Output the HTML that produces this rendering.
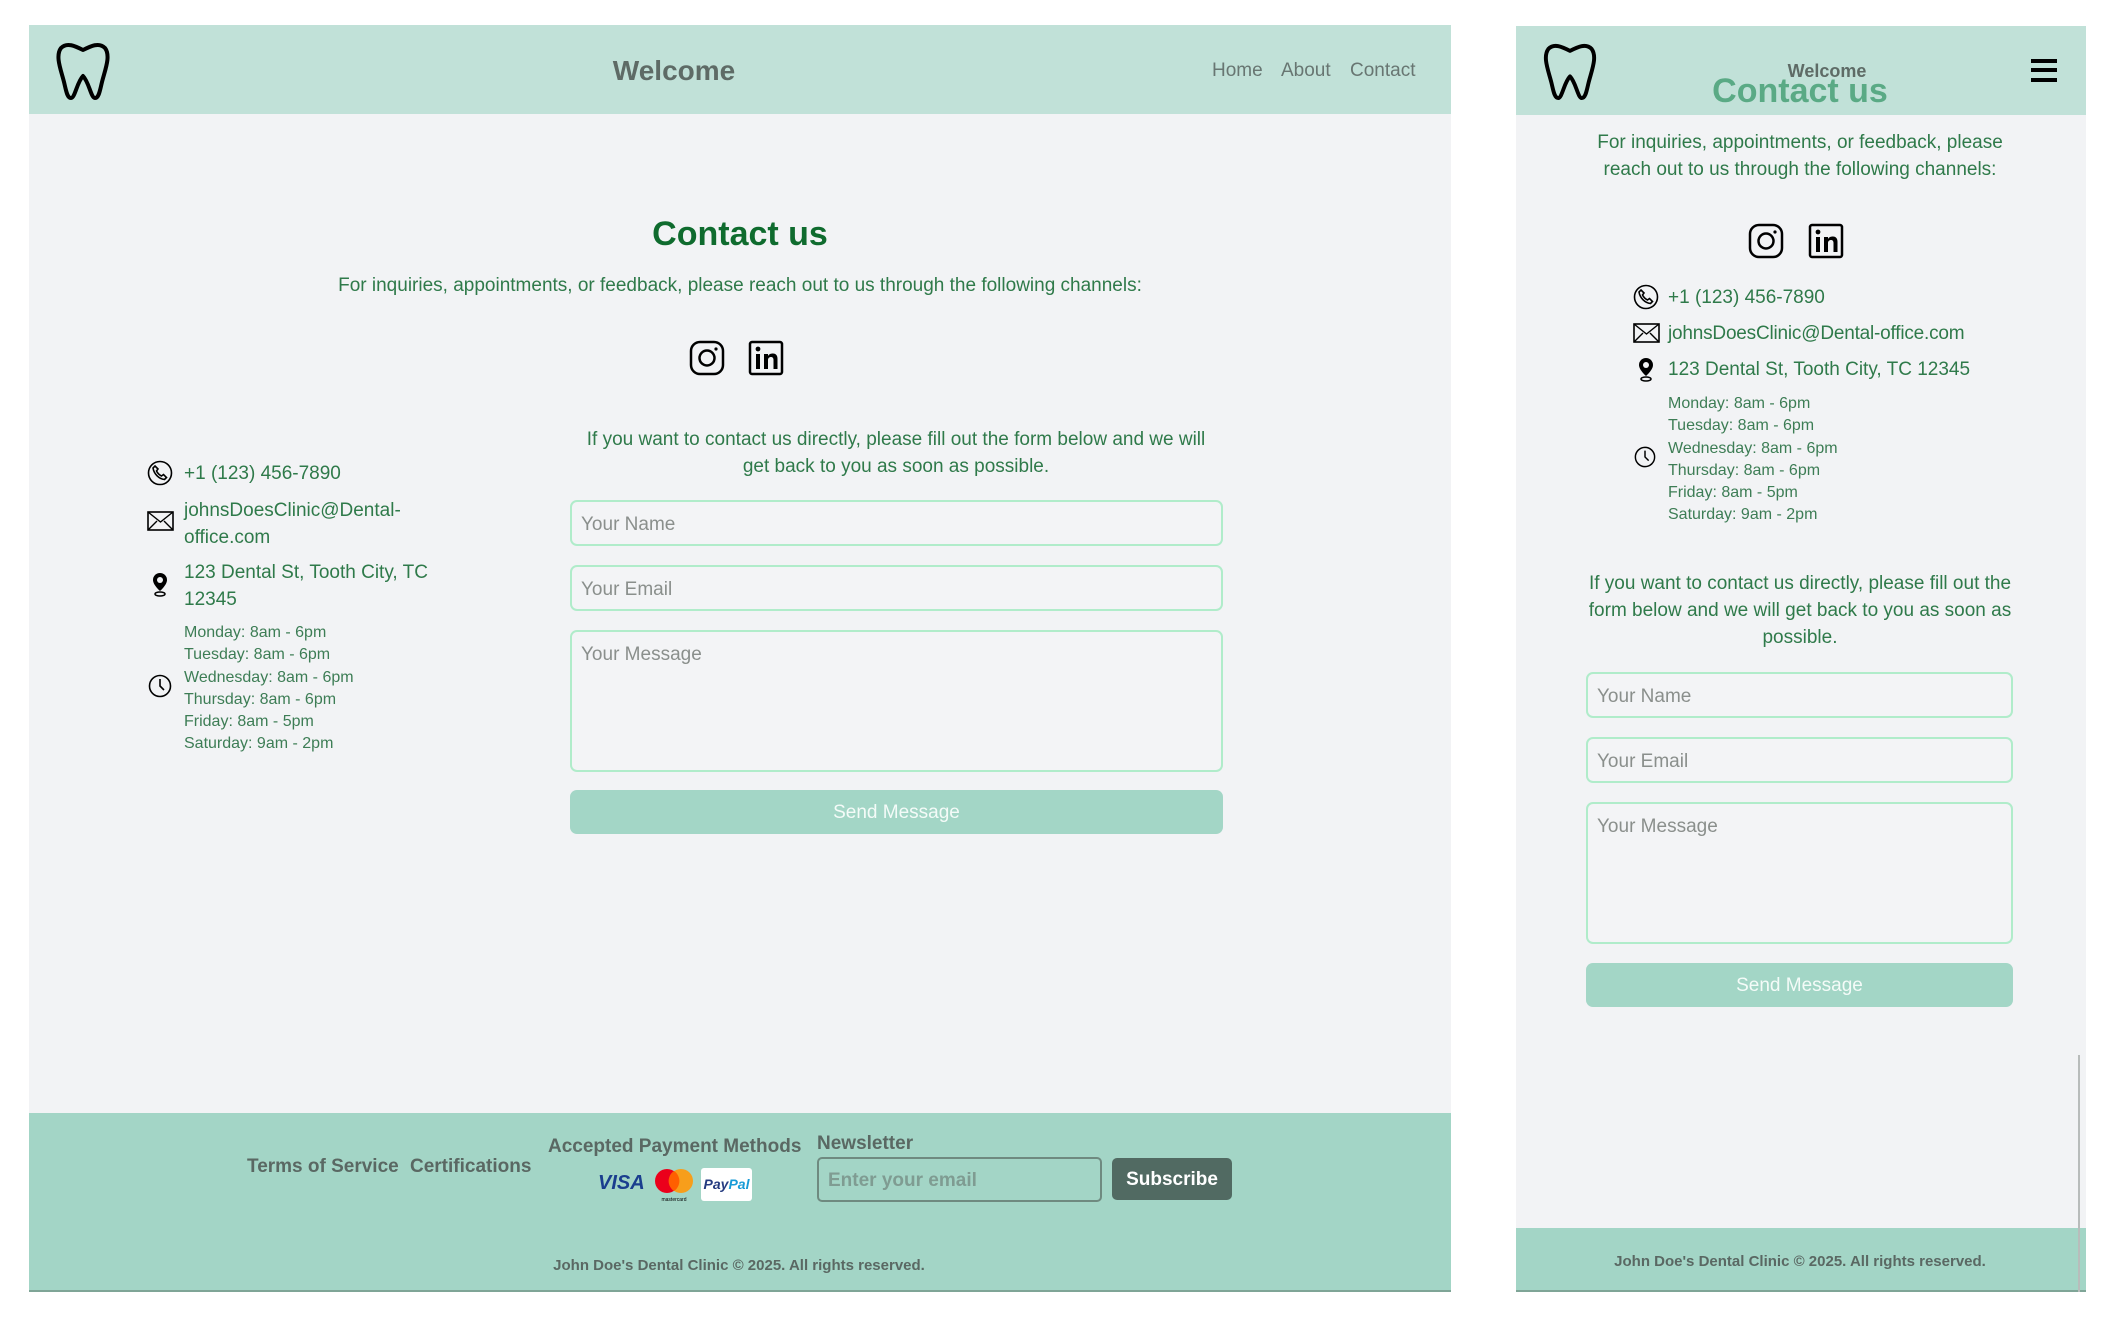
<!DOCTYPE html>
<html><head><meta charset="utf-8"><style>
*{margin:0;padding:0;box-sizing:border-box}
body{width:2103px;height:1319px;background:#fff;font-family:"Liberation Sans",sans-serif;position:relative;overflow:hidden}
.a{position:absolute;white-space:nowrap}
.c{transform:translateX(-50%);text-align:center}
.g{color:#2f7a4a}
.inp{position:absolute;border:2px solid #b0ecca;border-radius:7px;background:#f3f4f6;color:#8a8f8c;font-size:19px;padding:12px 9px}
.btn{position:absolute;background:#a3d6c6;border-radius:7px;color:#f4fbf8;font-size:19px;text-align:center}
.hr{font-size:16px;color:#3d7d55;line-height:22.3px}
</style></head><body>
<!-- LEFT PANEL -->
<div class="a" style="left:29px;top:25px;width:1422px;height:1267px;background:#f2f3f5"></div>
<div class="a" style="left:29px;top:25px;width:1422px;height:89px;background:#c1e1d8"></div>
<svg class="a" style="left:55px;top:42px" width="56" height="58" viewBox="0 0 56 58"><path d="M6 6C12 0 20 4 28 8 36 4 44 0 50 6 56 14 50 28 47 40 45 48 44 56 40 56 36 56 34 40 28 34 22 40 20 56 16 56 12 56 11 48 9 40 6 28 0 14 6 6Z" fill="none" stroke="#000" stroke-width="4" stroke-linejoin="round"/></svg>
<div class="a c" style="left:674px;top:55px;font-size:28px;font-weight:bold;color:#5e6b66">Welcome</div>
<div class="a" style="left:1212px;top:60px;font-size:19px;color:#687672">Home</div>
<div class="a" style="left:1281px;top:60px;font-size:19px;color:#687672">About</div>
<div class="a" style="left:1350px;top:60px;font-size:19px;color:#687672">Contact</div>
<div class="a c" style="left:740px;top:215px;font-size:34px;font-weight:bold;color:#0f6b2e">Contact us</div>
<div class="a c g" style="left:740px;top:275px;font-size:19px">For inquiries, appointments, or feedback, please reach out to us through the following channels:</div>
<svg class="a" style="left:689px;top:340px" width="36" height="36" viewBox="0 0 36 36"><rect x="2" y="2" width="32" height="32" rx="9" fill="none" stroke="#000" stroke-width="2.5"/><circle cx="18" cy="18" r="7.5" fill="none" stroke="#000" stroke-width="2.5"/><circle cx="27" cy="9" r="1.6"/></svg>
<svg class="a" style="left:748px;top:340px" width="36" height="36" viewBox="0 0 36 36"><rect x="2" y="2" width="32" height="32" rx="2" fill="none" stroke="#000" stroke-width="2.5"/><rect x="8" y="14" width="4" height="15"/><circle cx="10" cy="9" r="2.4"/><path d="M16 14h4v2c1-2 3-2.5 5-2.5 3 0 4.5 2 4.5 5.5V29h-4v-9c0-2-1-3-2.5-3S20 18 20 20v9h-4Z"/></svg>
<div class="a c g" style="left:896px;top:426px;font-size:19px;line-height:27px">If you want to contact us directly, please fill out the form below and we will<br>get back to you as soon as possible.</div>
<div class="inp" style="left:570px;top:500px;width:653px;height:46px">Your Name</div>
<div class="inp" style="left:570px;top:565px;width:653px;height:46px">Your Email</div>
<div class="inp" style="left:570px;top:630px;width:653px;height:142px">Your Message</div>
<div class="btn" style="left:570px;top:790px;width:653px;height:44px;line-height:46px">Send Message</div>
<!-- left contact info -->
<svg class="a" style="left:147px;top:460px" width="26" height="26" viewBox="0 0 26 26"><circle cx="13" cy="13" r="11.5" fill="none" stroke="#000" stroke-width="1.6"/><path d="M8 6l3 3-1.5 2c1 2 3 4 5 5l2-1.5 3 3-2 2C12 19 7 14 6 8Z" fill="none" stroke="#000" stroke-width="1.6"/></svg>
<div class="a g" style="left:184px;top:463px;font-size:19px">+1 (123) 456-7890</div>
<svg class="a" style="left:147px;top:511px" width="27" height="20" viewBox="0 0 27 20"><rect x="1" y="1" width="25" height="18" fill="none" stroke="#000" stroke-width="1.6"/><path d="M1 1l12.5 10L26 1M1 19l9-9M26 19l-9-9" fill="none" stroke="#000" stroke-width="1.4"/></svg>
<div class="a g" style="left:184px;top:497px;font-size:19px;line-height:27px">johnsDoesClinic@Dental-<br>office.com</div>
<svg class="a" style="left:151px;top:572px" width="18" height="25" viewBox="0 0 18 25"><path d="M9 1a7 7 0 0 0-7 7c0 5 7 11 7 11s7-6 7-11a7 7 0 0 0-7-7Z"/><circle cx="9" cy="8" r="3" fill="#f2f3f5"/><ellipse cx="9" cy="22" rx="5" ry="2" fill="none" stroke="#000" stroke-width="1.5"/></svg>
<div class="a g" style="left:184px;top:559px;font-size:19px;line-height:27px">123 Dental St, Tooth City, TC<br>12345</div>
<svg class="a" style="left:148px;top:674px" width="24" height="24" viewBox="0 0 24 24"><circle cx="12" cy="12" r="10.5" fill="none" stroke="#000" stroke-width="1.6"/><path d="M12 5v7l4 4" fill="none" stroke="#000" stroke-width="1.6"/></svg>
<div class="a hr" style="left:184px;top:622px">Monday: 8am - 6pm<br>Tuesday: 8am - 6pm<br>Wednesday: 8am - 6pm<br>Thursday: 8am - 6pm<br>Friday: 8am - 5pm<br>Saturday: 9am - 2pm</div>
<!-- left footer -->
<div class="a" style="left:29px;top:1113px;width:1422px;height:179px;background:#a3d5c6;border-bottom:2px solid #7fa597"></div>
<div class="a" style="left:247px;top:1156px;font-size:19px;font-weight:bold;color:#5a6863">Terms of Service</div>
<div class="a" style="left:410px;top:1156px;font-size:19px;font-weight:bold;color:#5a6863">Certifications</div>
<div class="a" style="left:548px;top:1136px;font-size:19px;font-weight:bold;color:#5a6863">Accepted Payment Methods</div>
<div class="a" style="left:598px;top:1172px;font-size:20px;font-weight:bold;font-style:italic;color:#1a3e8e">VISA</div>
<svg class="a" style="left:653px;top:1168px" width="42" height="34" viewBox="0 0 42 34"><circle cx="14" cy="13" r="12" fill="#eb001b"/><circle cx="28" cy="13" r="12" fill="#f79e1b"/><path d="M21 3a12 12 0 0 1 0 20 12 12 0 0 1 0-20Z" fill="#ff5f00"/><text x="21" y="33" font-size="5" text-anchor="middle" font-family="Liberation Sans">mastercard</text></svg>
<div class="a" style="left:701px;top:1168px;width:51px;height:33px;background:#fff;border-radius:3px;font-size:14px;font-weight:bold;font-style:italic;line-height:33px;text-align:center"><span style="color:#253b80">Pay</span><span style="color:#179bd7">Pal</span></div>
<div class="a" style="left:817px;top:1133px;font-size:19px;font-weight:bold;color:#5a6863">Newsletter</div>
<div class="a" style="left:817px;top:1157px;width:285px;height:45px;border:2px solid #6f8a80;border-radius:5px;font-size:19px;font-weight:bold;color:#7f9c92;padding:11px 9px">Enter your email</div>
<div class="a" style="left:1112px;top:1158px;width:120px;height:42px;background:#516a62;border-radius:5px;color:#fff;font-size:19px;font-weight:bold;text-align:center;line-height:44px">Subscribe</div>
<div class="a c" style="left:739px;top:1257px;font-size:15px;font-weight:bold;color:#5a6863">John Doe's Dental Clinic © 2025. All rights reserved.</div>

<!-- RIGHT PANEL -->
<div class="a" style="left:1516px;top:26px;width:570px;height:1266px;background:#f2f3f5"></div>
<div class="a" style="left:1516px;top:26px;width:570px;height:89px;background:#c1e1d8"></div>
<svg class="a" style="left:1542px;top:43px" width="56" height="57" viewBox="0 0 56 58"><path d="M6 6C12 0 20 4 28 8 36 4 44 0 50 6 56 14 50 28 47 40 45 48 44 56 40 56 36 56 34 40 28 34 22 40 20 56 16 56 12 56 11 48 9 40 6 28 0 14 6 6Z" fill="none" stroke="#000" stroke-width="4" stroke-linejoin="round"/></svg>
<div class="a c" style="left:1827px;top:61px;font-size:18px;font-weight:bold;color:#5e6b66">Welcome</div>
<div class="a c" style="left:1800px;top:72px;font-size:34px;font-weight:bold;color:#5aaa85">Contact us</div>
<div class="a" style="left:2031px;top:59px;width:26px;height:4px;background:#000;box-shadow:0 9px 0 #000,0 19px 0 #000"></div>
<div class="a c g" style="left:1800px;top:129px;font-size:19px;line-height:27px">For inquiries, appointments, or feedback, please<br>reach out to us through the following channels:</div>
<svg class="a" style="left:1748px;top:223px" width="36" height="36" viewBox="0 0 36 36"><rect x="2" y="2" width="32" height="32" rx="9" fill="none" stroke="#000" stroke-width="2.5"/><circle cx="18" cy="18" r="7.5" fill="none" stroke="#000" stroke-width="2.5"/><circle cx="27" cy="9" r="1.6"/></svg>
<svg class="a" style="left:1808px;top:223px" width="36" height="36" viewBox="0 0 36 36"><rect x="2" y="2" width="32" height="32" rx="2" fill="none" stroke="#000" stroke-width="2.5"/><rect x="8" y="14" width="4" height="15"/><circle cx="10" cy="9" r="2.4"/><path d="M16 14h4v2c1-2 3-2.5 5-2.5 3 0 4.5 2 4.5 5.5V29h-4v-9c0-2-1-3-2.5-3S20 18 20 20v9h-4Z"/></svg>
<svg class="a" style="left:1633px;top:284px" width="26" height="26" viewBox="0 0 26 26"><circle cx="13" cy="13" r="11.5" fill="none" stroke="#000" stroke-width="1.6"/><path d="M8 6l3 3-1.5 2c1 2 3 4 5 5l2-1.5 3 3-2 2C12 19 7 14 6 8Z" fill="none" stroke="#000" stroke-width="1.6"/></svg>
<div class="a g" style="left:1668px;top:287px;font-size:19px">+1 (123) 456-7890</div>
<svg class="a" style="left:1633px;top:323px" width="27" height="20" viewBox="0 0 27 20"><rect x="1" y="1" width="25" height="18" fill="none" stroke="#000" stroke-width="1.6"/><path d="M1 1l12.5 10L26 1M1 19l9-9M26 19l-9-9" fill="none" stroke="#000" stroke-width="1.4"/></svg>
<div class="a g" style="left:1668px;top:323px;font-size:19px;letter-spacing:-0.2px">johnsDoesClinic@Dental-office.com</div>
<svg class="a" style="left:1637px;top:357px" width="18" height="25" viewBox="0 0 18 25"><path d="M9 1a7 7 0 0 0-7 7c0 5 7 11 7 11s7-6 7-11a7 7 0 0 0-7-7Z"/><circle cx="9" cy="8" r="3" fill="#f2f3f5"/><ellipse cx="9" cy="22" rx="5" ry="2" fill="none" stroke="#000" stroke-width="1.5"/></svg>
<div class="a g" style="left:1668px;top:359px;font-size:19px">123 Dental St, Tooth City, TC 12345</div>
<svg class="a" style="left:1634px;top:446px" width="22" height="22" viewBox="0 0 24 24"><circle cx="12" cy="12" r="10.5" fill="none" stroke="#000" stroke-width="1.6"/><path d="M12 5v7l4 4" fill="none" stroke="#000" stroke-width="1.6"/></svg>
<div class="a hr" style="left:1668px;top:393px">Monday: 8am - 6pm<br>Tuesday: 8am - 6pm<br>Wednesday: 8am - 6pm<br>Thursday: 8am - 6pm<br>Friday: 8am - 5pm<br>Saturday: 9am - 2pm</div>
<div class="a c g" style="left:1800px;top:570px;font-size:19px;line-height:27px">If you want to contact us directly, please fill out the<br>form below and we will get back to you as soon as<br>possible.</div>
<div class="inp" style="left:1586px;top:672px;width:427px;height:46px">Your Name</div>
<div class="inp" style="left:1586px;top:737px;width:427px;height:46px">Your Email</div>
<div class="inp" style="left:1586px;top:802px;width:427px;height:142px">Your Message</div>
<div class="btn" style="left:1586px;top:963px;width:427px;height:44px;line-height:46px">Send Message</div>
<div class="a" style="left:1516px;top:1228px;width:570px;height:64px;background:#a3d5c6;border-bottom:2px solid #7fa597"></div>
<div class="a c" style="left:1800px;top:1253px;font-size:15px;font-weight:bold;color:#5a6863">John Doe's Dental Clinic © 2025. All rights reserved.</div>
<div class="a" style="left:2078px;top:1055px;width:2px;height:237px;background:#b8bcbb"></div>
</body></html>
